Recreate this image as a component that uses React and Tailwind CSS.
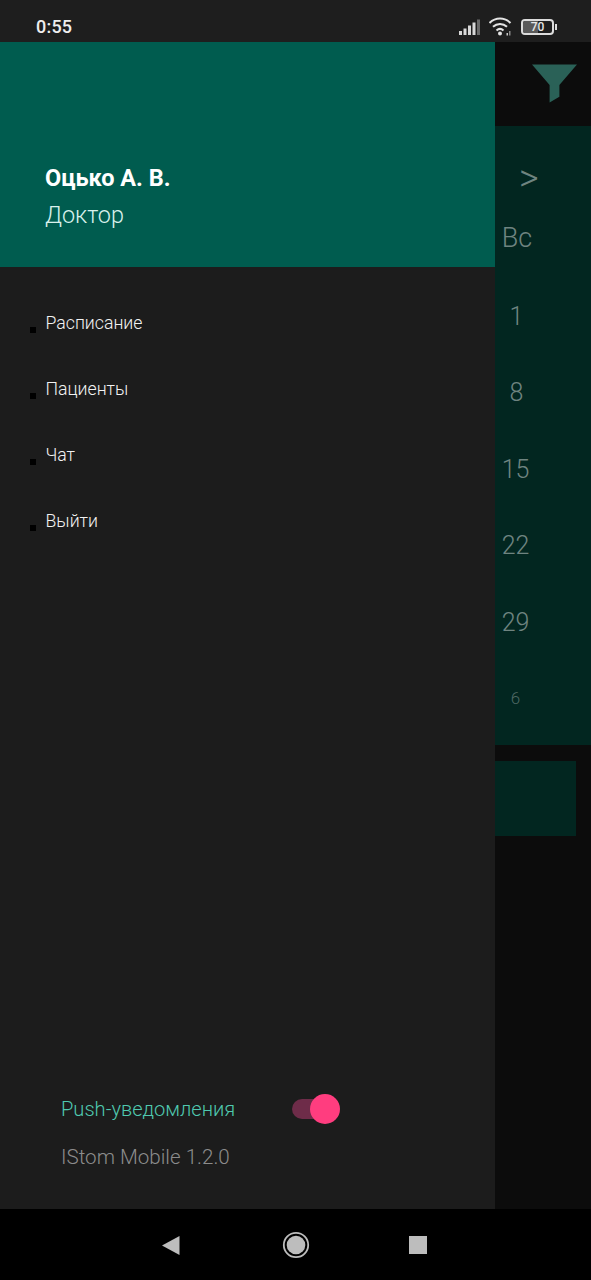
import React from "react";

const items = ["Расписание", "Пациенты", "Чат", "Выйти"];
const days = [
  { t: "1", c: "pl-[2px] text-[25px]" },
  { t: "8", c: "pl-[2px] text-[25px]" },
  { t: "15", c: "text-[25px]" },
  { t: "22", c: "text-[25px]" },
  { t: "29", c: "text-[25px]" },
  { t: "6", c: "text-[17px] text-[#4f6864]" },
];

function StatusIcons() {
  return (
    <div className="flex items-center">
      <svg width="22" height="16" viewBox="0 0 22 16" className="mr-[8px]">
        <rect x="0" y="12" width="3" height="4" fill="#d8d8d8" />
        <rect x="4.5" y="9.5" width="3" height="6.5" fill="#d8d8d8" />
        <rect x="9" y="6.5" width="3" height="9.5" fill="#d8d8d8" />
        <rect x="13.5" y="3.5" width="3" height="12.5" fill="#d8d8d8" />
        <rect x="18" y="0.5" width="3" height="15.5" fill="#6a6a6a" />
      </svg>
      <svg width="24" height="20" viewBox="0 0 24 20" className="mr-[8px]" fill="none">
        <path d="M0.5 6C6.5 0 15.5 0 21.5 6" stroke="#e4e4e4" strokeWidth="2" />
        <path d="M4 9.8C8 6 14 6 18 9.8" stroke="#e4e4e4" strokeWidth="2" />
        <path d="M7.5 13.5C9.6 11.6 12.4 11.6 14.5 13.5" stroke="#e4e4e4" strokeWidth="2" />
        <circle cx="11" cy="16.5" r="2" fill="#e4e4e4" />
        <rect x="20" y="14" width="1.5" height="4.5" fill="#8a8a8a" />
        <rect x="17.5" y="16" width="1.5" height="2.5" fill="#c8c8c8" />
      </svg>
      <div className="flex items-center">
        <div className="relative flex h-[16px] w-[33px] items-center justify-center rounded-[4px] border-2 border-[#dcdcdc] overflow-hidden">
          <div className="absolute inset-y-0 left-0 w-[15px] bg-[#5a5a5a]" />
          <span className="relative text-[12px] leading-none font-medium text-[#e8e8e8]">70</span>
        </div>
        <div className="ml-[1px] h-[6px] w-[2px] bg-[#dcdcdc]" />
      </div>
    </div>
  );
}

export default function App() {
  return (
    <div className="flex h-[1280px] w-[591px] flex-col overflow-hidden bg-[#0c0c0c] font-['Roboto',sans-serif]">
      <div className="flex h-[42px] shrink-0 items-center justify-between bg-[#1e1e1e] pl-[36px] pr-[34px] pt-[11px]">
        <span className="text-[18px] font-medium tracking-[0.2px] text-[#eeeeee]">0:55</span>
        <StatusIcons />
      </div>

      <div className="flex min-h-0 flex-1">
        <aside className="flex w-[495px] shrink-0 flex-col bg-[#1c1c1c]">
          <div className="flex h-[225px] shrink-0 flex-col bg-[#005c4f] pl-[45px] pt-[122px]">
            <div className="text-[23.5px] leading-[28px] font-bold text-white">Оцько А. В.</div>
            <div className="mt-[9px] text-[23.4px] leading-[28px] font-light text-[#d9f1ec]">Доктор</div>
          </div>

          <nav className="flex flex-col pt-[23px]">
            {items.map((t) => (
              <div key={t} className="flex h-[66px] items-center pl-[30px] text-[17.7px] font-light text-[#f2f2f2]">
                <span className="mt-[13px] mr-[9.5px] h-[6px] w-[6px] bg-black" />
                <span>{t}</span>
              </div>
            ))}
          </nav>

          <div className="mt-auto pb-[40px] pl-[61px]">
            <div className="flex h-[48px] items-center">
              <span className="w-[231px] text-[20.1px] font-light text-[#4fc9b0]">Push-уведомления</span>
              <div className="relative h-[20px] w-[36px] rounded-full bg-[#6e2c49]">
                <div className="absolute right-[-12px] top-[-5px] h-[30px] w-[30px] rounded-full bg-[#ff3d7f]" />
              </div>
            </div>
            <div className="mt-[12px] text-[20.6px] leading-[24px] font-light text-[#8c8c8c]">IStom Mobile 1.2.0</div>
          </div>
        </aside>

        <main className="flex flex-1 flex-col">
          <div className="flex h-[84px] shrink-0 items-start justify-end pr-[14px] pt-[22px]">
            <svg width="45" height="40" viewBox="0 0 46 40">
              <path d="M0 0H46L28 21V33L18 39V21Z" fill="#2a6157" />
            </svg>
          </div>

          <div className="flex h-[619px] shrink-0 flex-col items-start bg-[#022620] pl-[6px] text-[#6f8480]">
            <div className="mt-[32px] h-[40px] pl-[18px] text-[38px] leading-[41px] font-light">&gt;</div>
            <div className="mt-[18px] flex h-[42px] w-[32px] items-center justify-center pt-[3px] text-[27px] font-light text-[#6f8480]">Вс</div>
            <div className="mt-[20px]">
              {days.map((d) => (
                <div key={d.t} className={`flex h-[76.5px] w-[29px] items-center justify-center font-light ${d.c}`}>
                  {d.t}
                </div>
              ))}
            </div>
          </div>

          <div className="mt-[16px] h-[75px] w-[81px] shrink-0 bg-[#022620]" />
        </main>
      </div>

      <div className="relative flex h-[71px] shrink-0 items-center bg-black">
        <svg width="18" height="20" viewBox="0 0 18 20" className="ml-[162px]">
          <path d="M0 10.5L17.5 1V20Z" fill="#bdbdbd" />
        </svg>
        <svg width="28" height="28" viewBox="0 0 28 28" className="ml-[102px]">
          <circle cx="14" cy="14" r="12.2" fill="none" stroke="#bdbdbd" strokeWidth="1.8" />
          <circle cx="14" cy="14" r="9.3" fill="#bdbdbd" />
        </svg>
        <div className="ml-[99px] h-[18px] w-[18px] bg-[#bdbdbd]" />
      </div>
    </div>
  );
}
